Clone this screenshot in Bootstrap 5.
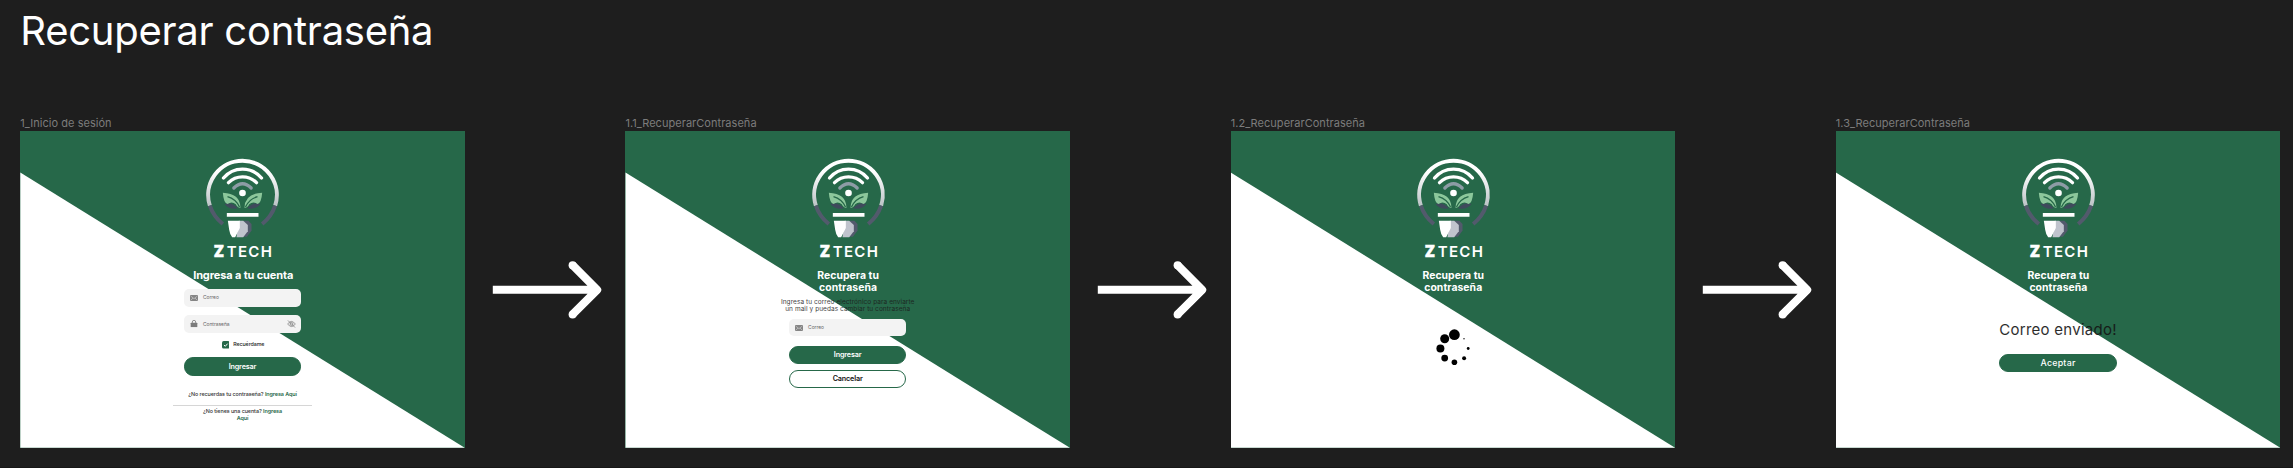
<!DOCTYPE html>
<html lang="es">
<head>
<meta charset="utf-8">
<title>Recuperar contraseña</title>
<link href="https://cdn.jsdelivr.net/npm/bootstrap@5.3.0/dist/css/bootstrap.min.css" rel="stylesheet">
<style>
:root{--brand:#266849}
body{background:#1e1e1e;font-family:Inter,"Open Sans",sans-serif;height:468px;overflow:hidden}
.board{padding:0 13px 0 20.3px;height:467px}
.board-title{font-size:40px;font-weight:400;line-height:48px;padding-top:7px;margin-bottom:59.9px;color:#fff;letter-spacing:-.26px}
.step-name{font-size:11px;line-height:16.5px;color:#7c7c7c;white-space:nowrap;letter-spacing:.04px}
.step{width:444.4px}
.screen{height:316.4px;background:var(--brand);position:relative;padding-top:25.4px;line-height:1}
.screen::before{content:"";position:absolute;inset:0;background:#fff;clip-path:polygon(0 41px,100% 100%,0 100%)}
.screen>*{position:relative;flex:none}
.arrow{width:160.8px;height:316px;margin-top:16.9px}
.heading{margin:10.3px 0 0;padding-left:1.4px;font-size:11px;font-weight:700;line-height:11.5px;color:#fff;letter-spacing:-.13px;text-align:center}
.heading.narrow{font-size:10.4px;letter-spacing:.06px;padding-left:.8px}
.field{width:117.2px;height:17.6px;border-radius:5px;background:#f3f3f3;padding:0 5px 0 6px;font-size:4.9px;color:#666}
.field svg{flex:none}
.field .hint{margin-left:5px;flex:1}
.remember{height:8px;font-size:5.3px;font-weight:500;color:#222;gap:4px;letter-spacing:-.06px;padding-left:1px}
.action{width:117.2px;height:18.2px;padding:0;border-radius:9.1px;background:var(--brand);border:1.2px solid var(--brand);color:#fff;font-size:7.2px;font-weight:600;line-height:15.8px;letter-spacing:-.14px}
.action.outline{background:#fff;color:#111}
.action.wide{font-size:8.8px;letter-spacing:.25px;font-weight:500}
.note{font-size:5.4px;font-weight:500;line-height:7px;color:#333;text-align:center;letter-spacing:-.07px}
.note b{color:var(--brand);font-weight:600}
.rule{width:138.5px;height:1px;background:#d6d6d6}
.message{font-size:6.5px;line-height:7.2px;color:#1c1c1c;opacity:.86;text-align:center;letter-spacing:.06px}
.done{font-size:15px;line-height:18px;color:#151515;opacity:.9;letter-spacing:.26px}
.footline{height:1px;background:#171717}
</style>
</head>
<body>
<svg width="0" height="0" class="position-absolute">
<defs>
<linearGradient id="glass" x1="0" y1="0" x2="0" y2="1"><stop offset=".25" stop-color="#fff"/><stop offset="1" stop-color="#bcc3c6"/></linearGradient>
<symbol id="logo" viewBox="36.5 35 240 310">
<g fill="none" stroke-width="12">
<path d="M60 181A103 103 0 1 1 256 181" stroke="url(#glass)"/>
<path d="M60 181Q71 214 99 236M256 181Q245 214 217 236" stroke="#525a6c"/>
</g>
<g fill="none" stroke="#fff" stroke-width="10" stroke-linecap="round">
<path d="M101 98A74 74 0 0 1 215 98M116 112A60 60 0 0 1 200 112"/>
<path d="M132 128Q158 102 184 128" stroke="#8d9ca5"/>
</g>
<circle cx="158" cy="143" r="10" fill="#fff"/>
<g id="leaf">
<path d="M104 176Q124 168 144 189Q118 194 104 176Z" fill="#3f4a5c"/>
<path d="M99 142Q151 144 152 187Q143 188 138 177Q126 166 113 176Q101 172 99 142Z" fill="#8cc79b"/>
<path d="M113 154Q138 161 149 185" fill="none" stroke="#266849" stroke-width="4"/>
</g>
<use href="#leaf" transform="matrix(-1 0 0 1 316 0)"/>
<path d="M111 203h95v11h-95z" fill="#fff"/>
<path d="M160 226h16l9 10v20l-14 18h-14z" fill="#525a6c"/>
<path d="M147 226h13l14 13v19l-14 18h-20z" fill="#c0c4cd"/>
<path d="M114 226h36v22l-14 28h-9q-7-9-9-23z" fill="#fff"/>
<g fill="#fff" font-family="Inter,sans-serif">
<text x="72" y="336" font-size="46" font-weight="900" stroke="#fff" stroke-width="1.5" textLength="31" lengthAdjust="spacingAndGlyphs">Z</text>
<text x="111" y="336" font-size="45" font-weight="600" textLength="135">TECH</text>
</g>
</symbol>
<symbol id="mail" viewBox="0 0 24 18"><rect width="24" height="18" rx="2" fill="#858585"/><path d="M2 3l10 8 10-8M2 16l7-7M22 16l-7-7" fill="none" stroke="#e4e4e4" stroke-width="1.5"/></symbol>
<symbol id="lock" viewBox="0 0 20 22"><rect y="8" width="20" height="14" rx="2" fill="#7b7b7b"/><path d="M5 9V6a5 5 0 0 1 10 0v3" fill="none" stroke="#7b7b7b" stroke-width="2.4"/></symbol>
<symbol id="eye-off" viewBox="0 0 28 24"><g fill="none" stroke="#777" stroke-width="2.2"><path d="M2 12Q14-4 26 12Q14 28 2 12Z"/><circle cx="14" cy="12" r="4.5"/><path d="M3 1l22 22"/></g></symbol>
<symbol id="next" viewBox="0 0 160.8 316"><path d="M27.8 157.8H133M107.6 133.2l24.6 24.6-24.6 24.6" fill="none" stroke="#fff" stroke-width="8" stroke-linejoin="round"/><g fill="#fff"><circle cx="107.6" cy="133.2" r="4"/><circle cx="107.6" cy="182.4" r="4"/></g></symbol>
</defs>
</svg>

<main class="board">
<h1 class="board-title">Recuperar contraseña</h1>
<div class="d-flex align-items-start">

<section class="step flex-shrink-0">
<div class="step-name">1_Inicio de sesión</div>
<div class="screen d-flex flex-column align-items-center">
<svg width="80" height="103.3"><use href="#logo"/></svg>
<h2 class="heading">Ingresa a tu cuenta</h2>
<div class="field d-flex align-items-center" style="margin-top:7.2px"><svg width="8" height="6"><use href="#mail"/></svg><span class="hint">Correo</span></div>
<div class="field d-flex align-items-center" style="margin-top:8.6px"><svg width="8" height="7.3"><use href="#lock"/></svg><span class="hint">Contraseña</span><svg width="9" height="8"><use href="#eye-off"/></svg></div>
<div class="remember d-flex align-items-center" style="margin-top:8px"><svg width="7.6" height="7.6" viewBox="0 0 23 23"><rect width="23" height="23" rx="5" fill="#266849"/><path d="M6 12l4 4 7-8" fill="none" stroke="#fff" stroke-width="3"/></svg><span>Recuérdame</span></div>
<button class="btn action" style="margin-top:8.5px">Ingresar</button>
<div class="note" style="margin-top:15.3px">¿No recuerdas tu contraseña? <b>Ingresa Aquí</b></div>
<div class="rule" style="margin-top:7.3px"></div>
<div class="note" style="margin-top:2px">¿No tienes una cuenta? <b>Ingresa<br>Aquí</b></div>
</div>
</section>

<svg class="arrow flex-shrink-0"><use href="#next"/></svg>

<section class="step flex-shrink-0">
<div class="step-name">1.1_RecuperarContraseña</div>
<div class="screen d-flex flex-column align-items-center">
<svg width="80" height="103.3"><use href="#logo"/></svg>
<h2 class="heading narrow">Recupera tu<br>contraseña</h2>
<div class="message" style="margin-top:5.4px">Ingresa tu correo electrónico para enviarte<br>un mail y puedas cambiar tu contraseña</div>
<div class="field d-flex align-items-center" style="margin-top:5.6px"><svg width="8" height="6"><use href="#mail"/></svg><span class="hint">Correo</span></div>
<button class="btn action" style="margin-top:9.9px">Ingresar</button>
<button class="btn action outline" style="margin-top:5.5px">Cancelar</button>
</div>
</section>

<svg class="arrow flex-shrink-0"><use href="#next"/></svg>

<section class="step flex-shrink-0">
<div class="step-name">1.2_RecuperarContraseña</div>
<div class="screen d-flex flex-column align-items-center">
<svg width="80" height="103.3"><use href="#logo"/></svg>
<h2 class="heading narrow">Recupera tu<br>contraseña</h2>
<svg width="40" height="40" viewBox="-21.4 -20.5 40 40" style="margin-top:34.7px">
<circle cy="-13.8" r="5.4"/><circle cx="-9.7" cy="-9.8" r="4.5"/><circle cx="-14" r="4"/><circle cx="-9.7" cy="9.6" r="3.4"/><circle cy="13.8" r="2.8"/><circle cx="9.7" cy="9.8" r="2"/><circle cx="13.8" r="1.4"/><circle cx="9.6" cy="-9.8" r=".7"/>
</svg>
</div>
</section>

<svg class="arrow flex-shrink-0"><use href="#next"/></svg>

<section class="step flex-shrink-0">
<div class="step-name">1.3_RecuperarContraseña</div>
<div class="screen d-flex flex-column align-items-center">
<svg width="80" height="103.3"><use href="#logo"/></svg>
<h2 class="heading narrow">Recupera tu<br>contraseña</h2>
<div class="done" style="margin-top:27.3px">Correo enviado!</div>
<button class="btn action wide" style="margin-top:15.4px">Aceptar</button>
</div>
</section>

</div>
</main>
<div class="footline"></div>
<script src="https://cdn.jsdelivr.net/npm/bootstrap@5.3.0/dist/js/bootstrap.bundle.min.js"></script>
</body>
</html>
